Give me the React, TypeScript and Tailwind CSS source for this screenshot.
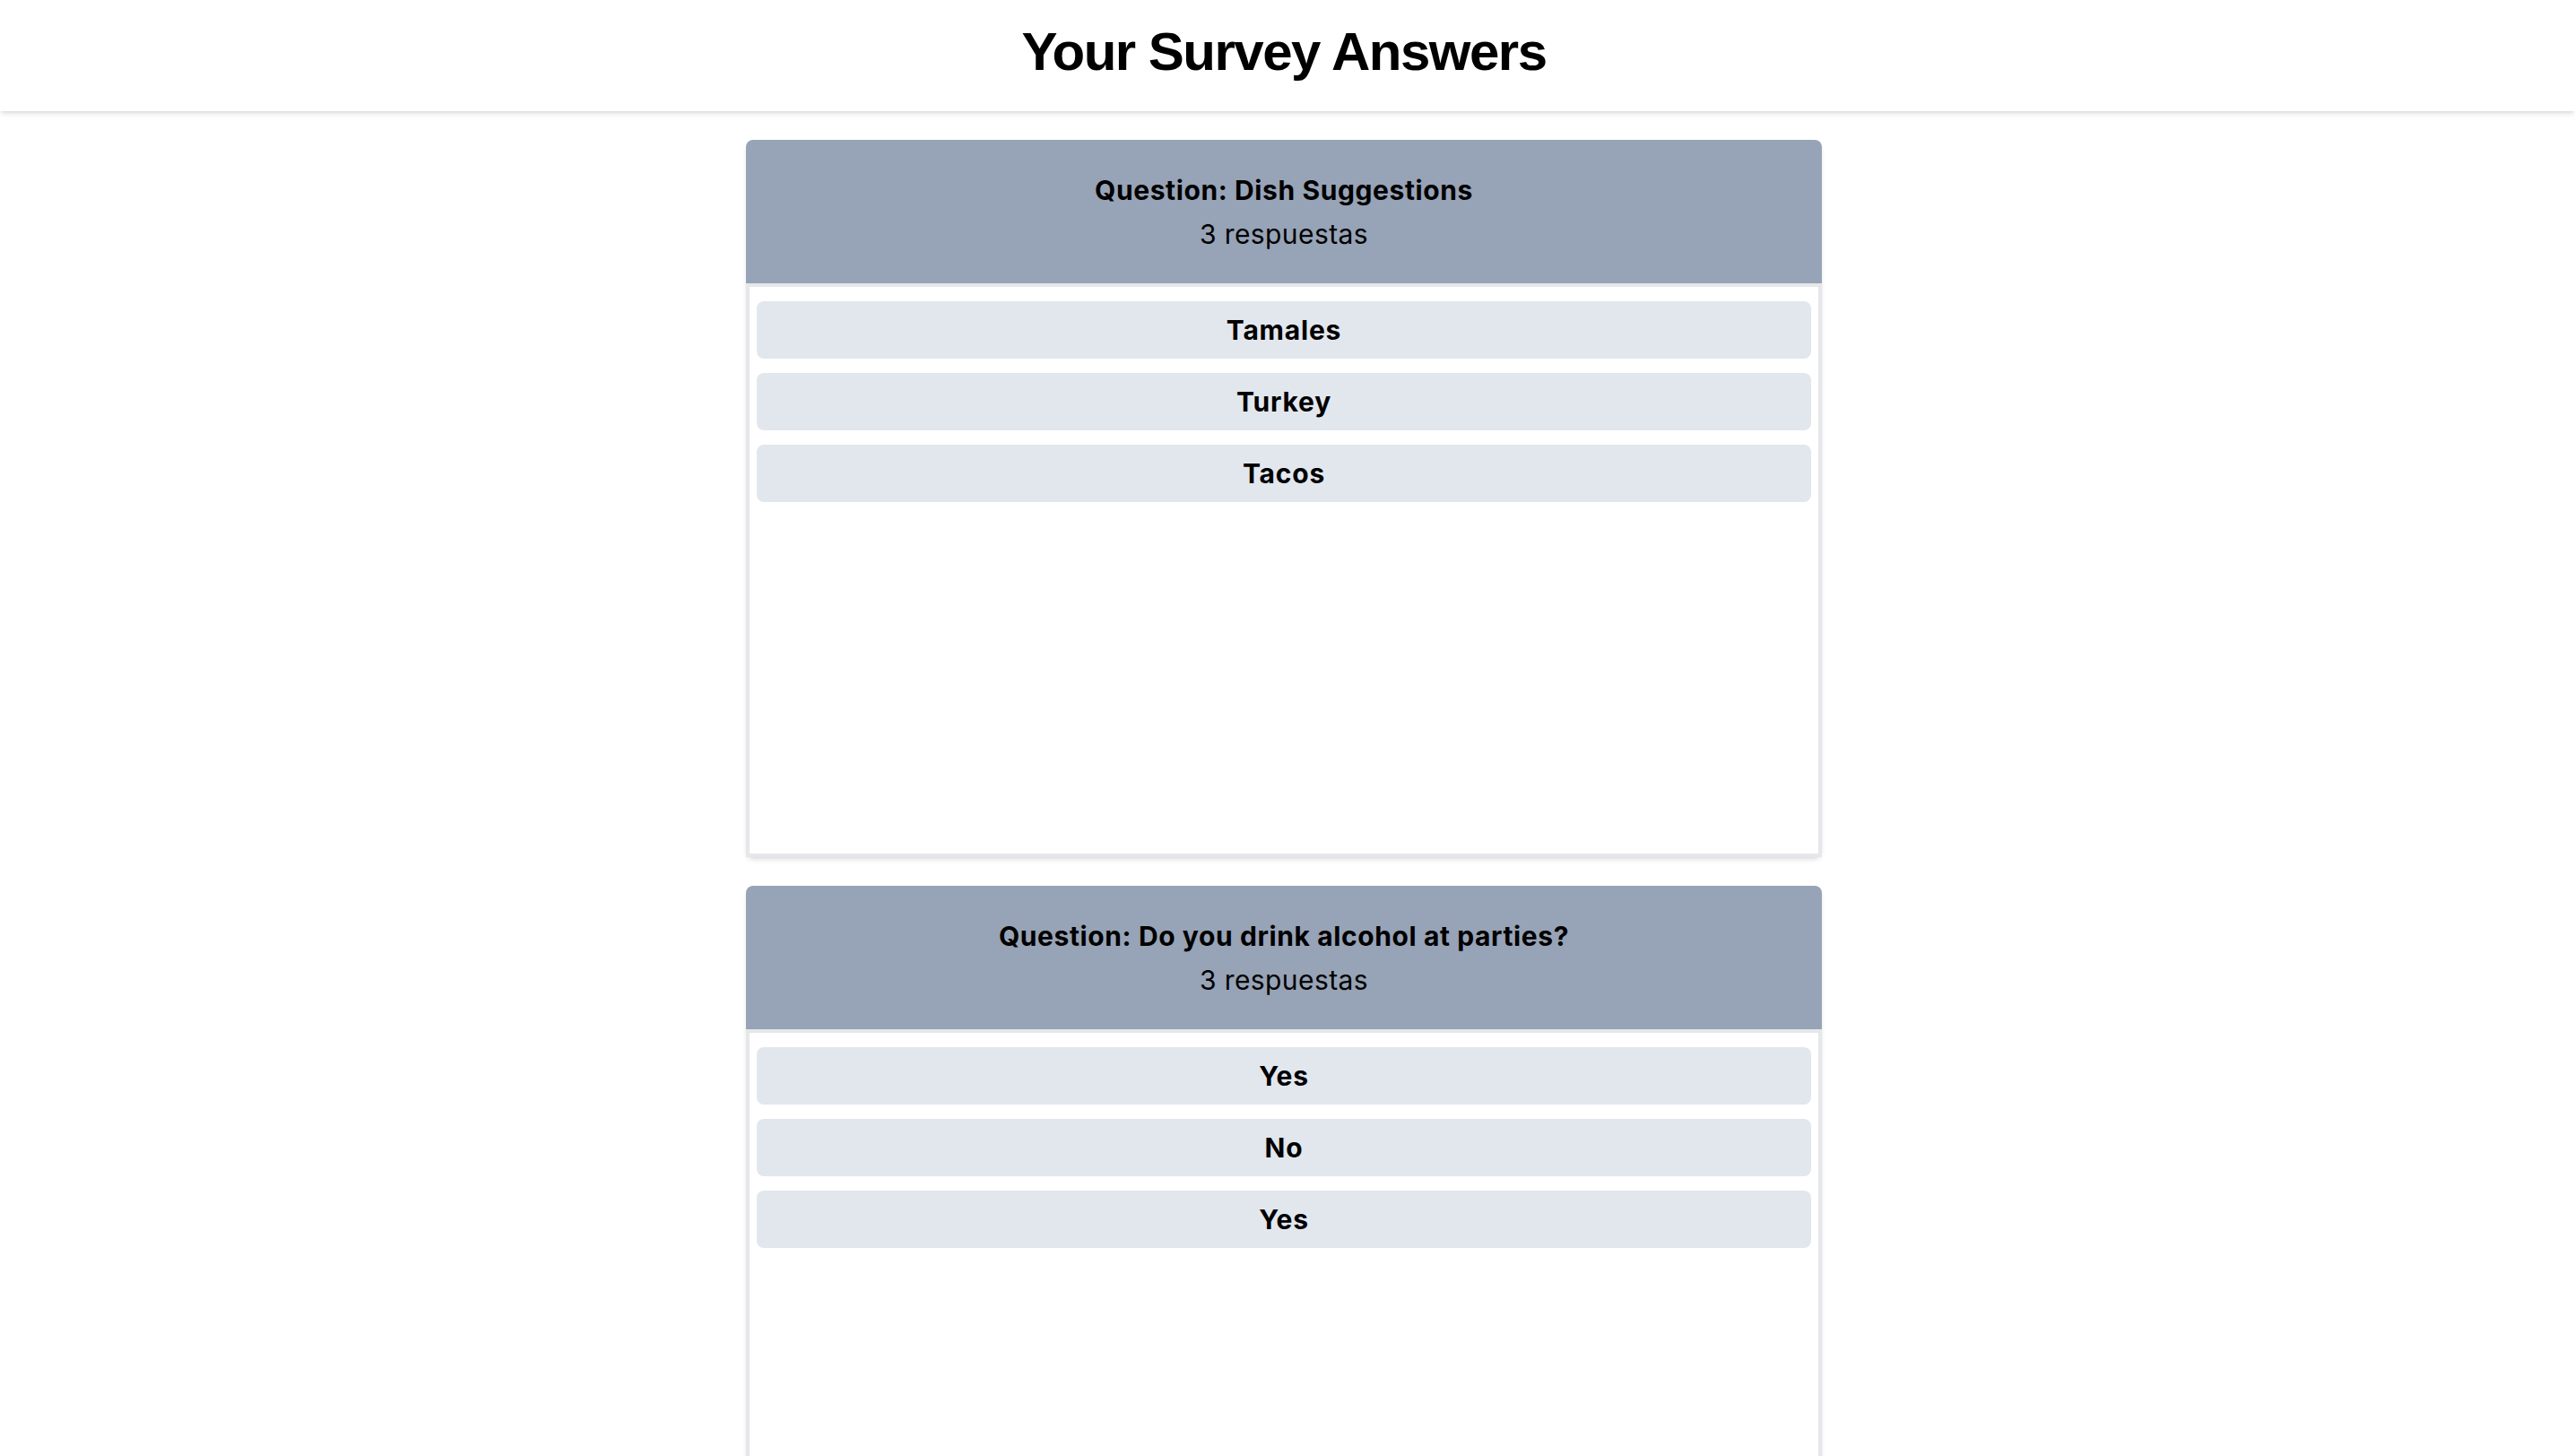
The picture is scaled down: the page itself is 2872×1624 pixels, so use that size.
const surveys = [
  {
    question: "Dish Suggestions",
    answers: ["Tamales", "Turkey", "Tacos"],
  },
  {
    question: "Do you drink alcohol at parties?",
    answers: ["Yes", "No", "Yes"],
  },
];

function QuestionCard({ question, answers }: { question: string; answers: string[] }) {
  return (
    <div className="w-[1200px] h-[800px] flex flex-col rounded-lg shadow-md">
      {/* Question header */}
      <div className="h-[160px] shrink-0 flex flex-col items-center justify-center bg-[#97a3b6] rounded-t-lg text-black">
        <h3 className="text-[30px] leading-[42px] font-bold tracking-[0.6px]">Question: {question}</h3>
        <p className="mt-[7px] text-[30px] leading-[42px] tracking-[0.4px]">{answers.length} respuestas</p>
      </div>

      {/* Answers */}
      <div className="flex-1 flex flex-col gap-4 px-2 pt-4 border-4 border-gray-200 bg-white">
        {answers.map((answer, i) => (
          <div
            key={i}
            className="h-16 flex items-center justify-center rounded-lg bg-[#e2e7ee] text-[30px] font-bold tracking-[0.8px] text-black"
          >
            {answer}
          </div>
        ))}
      </div>
    </div>
  );
}

export default function App() {
  return (
    <div className="min-h-screen bg-white [font-family:Inter,sans-serif]">
      <header className="h-[124px] pt-[28px] pr-2 bg-white shadow-md">
        <h1 className="text-center text-[60px] leading-[60px] font-bold tracking-[-1.5px] text-black [font-family:'Liberation_Sans',Arial,sans-serif]">
          Your Survey Answers
        </h1>
      </header>

      <main className="flex flex-col items-center gap-8 pt-8 pb-8 pr-2">
        {surveys.map((s, i) => (
          <QuestionCard key={i} question={s.question} answers={s.answers} />
        ))}
      </main>
    </div>
  );
}
